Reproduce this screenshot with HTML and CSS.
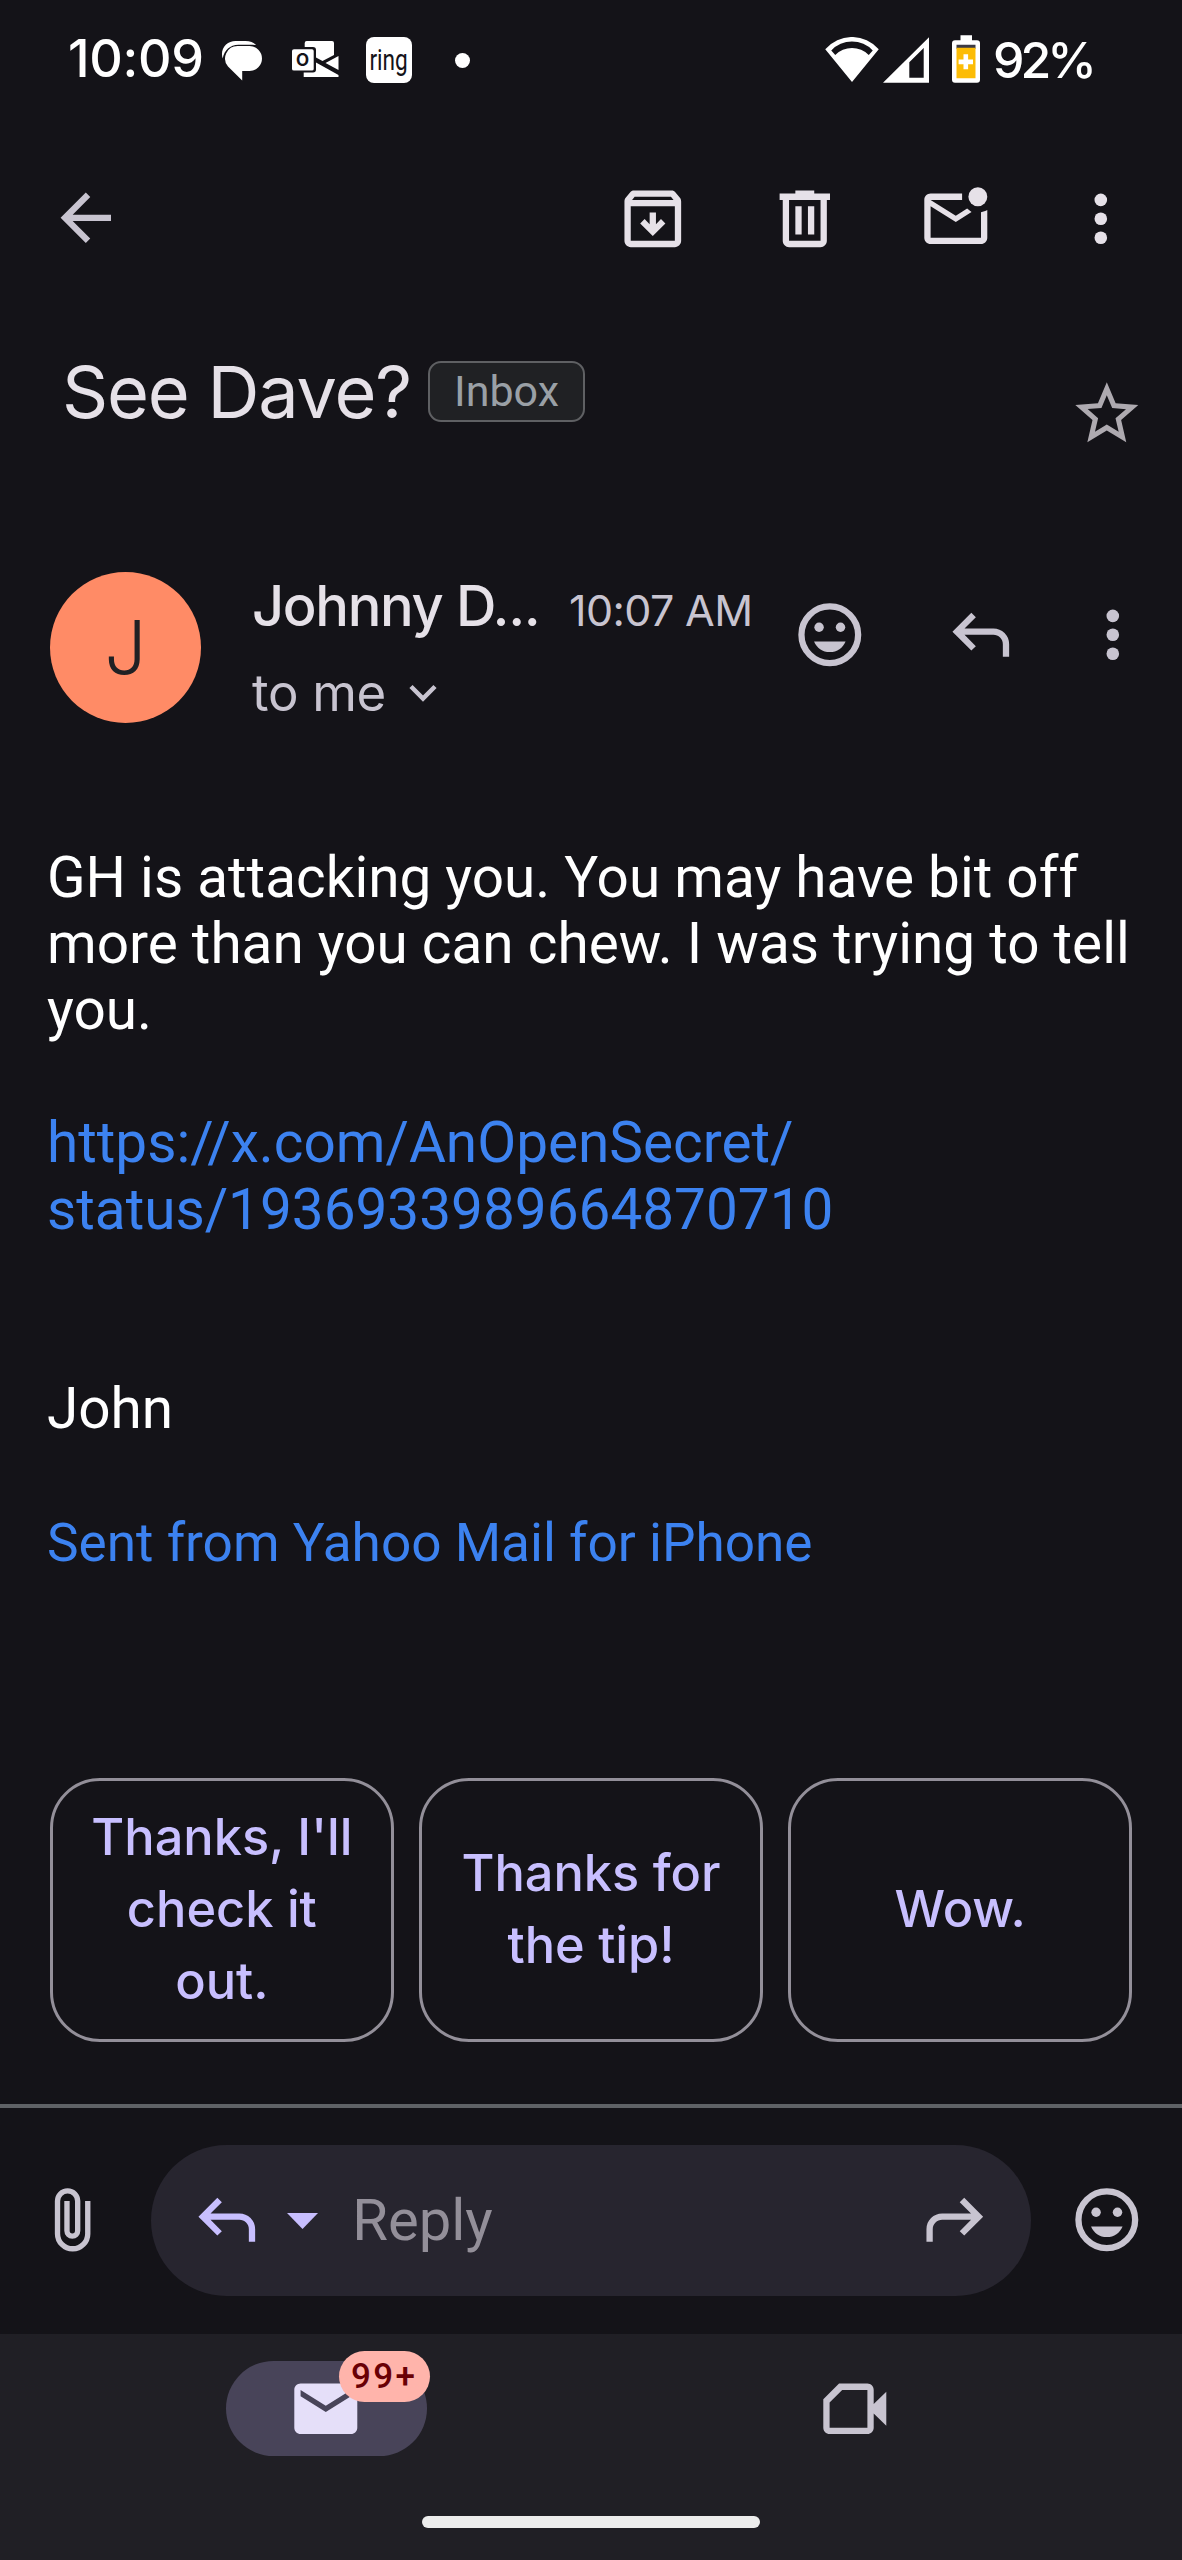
FILE: index.html
```html
<!DOCTYPE html>
<html lang="en">
<head>
<meta charset="utf-8">
<title>See Dave?</title>
<link rel="stylesheet" href="styles.css">
</head>
<body>
<svg class="sprite" aria-hidden="true">
  <symbol id="reply" viewBox="0 0 24 24"><path d="M19 19v-4c0-.83-.29-1.54-.88-2.13C17.54 12.29 16.83 12 16 12H6.83l3.6 3.6L9 17l-6-6 6-6 1.43 1.4L6.83 10H16c1.38 0 2.56.49 3.54 1.46C20.51 12.44 21 13.63 21 15v4h-2z"/></symbol>
  <symbol id="more" viewBox="0 0 24 24"><circle cx="12" cy="6" r="2"/><circle cx="12" cy="12" r="2"/><circle cx="12" cy="18" r="2"/></symbol>
  <symbol id="smile" viewBox="0 0 24 24"><circle cx="12" cy="12" r="9" fill="none" stroke="currentColor" stroke-width="2"/><circle cx="8.6" cy="9.6" r="1.5"/><circle cx="15.4" cy="9.6" r="1.5"/><path d="M12 17.5c2.3 0 4.2-1.4 5-3.4H7c.8 2 2.7 3.4 5 3.4z"/></symbol>
</svg>

<header class="status">
  <span class="clock">10:09</span>
  <svg class="chat" viewBox="0 0 40 40"><path d="M1.2 17.5C-2 7.5 5.5 0 14 0h10c4.500 0 8 1.300 10.500 4.100L31 3.700H17C8.500 3.700 2.800 9 1.200 17.500z"/><path d="M16 5h12a12.500 12.500 0 0 1 0 25h-7.300v9.500L6.500 25.500A12.500 12.500 0 0 1 16 5z"/></svg>
  <svg class="outlook" viewBox="0 0 47 37"><path d="M12.700 6V2q0-2 2-2H40q2 0 2 2v12l-11.500 6-6.500-3.500V9q0-3-3-3zM33.500 22L46.500 15v14zM11.700 36v-4.500H21q3 0 3-3v-7L46.500 34v2zM2 8.300h18q1.700 0 1.700 1.700v18q0 1.500-1.700 1.500H2Q0 29.500 0 28V10q0-1.700 2-1.700z"/><text x="10.600" y="24.800" text-anchor="middle">O</text></svg>
  <span class="ring"><span>ring</span></span>
  <span class="dot"></span>
  <svg class="wifi" viewBox="0 0 53.500 45"><path fill-rule="evenodd" d="M0 12.300A35.200 35.200 0 0 1 53.500 12.300L26.750 45zM6 13.500L10 18A23.500 23.500 0 0 1 43.500 18L47.500 13.500A28.400 28.400 0 0 0 6 13.500z"/></svg>
  <svg class="signal" viewBox="0 0 46 45.500"><path fill-rule="evenodd" d="M0 45.500L46 0v45.500zM26.300 25v15.500h14.400V10.700z"/></svg>
  <svg class="battery" viewBox="0 0 28 47.500"><path d="M8.500 0h11.500v5H25q3 0 3 3v36.500q0 3-3 3H3q-3 0-3-3V8q0-3 3-3h5.500z"/><path fill="#3c3a44" d="M4.500 9.500h19v4h-19z"/><path fill="#fcbc05" d="M4.500 12.500h19V43h-19z"/><path d="M11.500 19h4.600v5.200h4.900v4.700h-4.900V34h-4.600v-5.100H6.600v-4.700h4.900z"/></svg>
  <span class="percent">92%</span>
</header>

<nav class="toolbar">
  <svg class="icon back" viewBox="0 0 24 24"><path d="M20 11H7.830l5.590-5.590L12 4l-8 8 8 8 1.410-1.410L7.830 13H20v-2z"/></svg>
  <svg class="icon" viewBox="0 0 24 24"><path d="M20.540 5.230l-1.390-1.680C18.880 3.210 18.470 3 18 3H6c-.47 0-.88.21-1.160.55L3.460 5.230C3.170 5.570 3 6.020 3 6.500V19c0 1.100.9 2 2 2h14c1.100 0 2-.9 2-2V6.500c0-.48-.17-.93-.46-1.270zM6.240 5h11.520l.83 1H5.420l.82-1zM5 19V8h14v11H5z"/><path d="M8 13.500l4 4 4-4-1.400-1.400-1.600 1.600V10h-2v3.700l-1.600-1.600z"/></svg>
  <svg class="icon" viewBox="0 0 24 24"><path d="M7 21c-.55 0-1.020-.2-1.410-.59C5.200 20.020 5 19.550 5 19V6H4V4h5V3h6v1h5v2h-1v13c0 .55-.2 1.020-.59 1.410-.39.39-.86.59-1.410.59H7zM17 6H7v13h10V6zM9 17h2V8H9v9zm4 0h2V8h-2v9z"/></svg>
  <svg class="icon" viewBox="0 0 24 24"><path d="M22 9.200V18c0 1.100-.9 2-2 2H4c-1.100 0-2-.9-2-2V6c0-1.100.9-2 2-2h10v2H4l8 5 3.600-2.250L17 9.850 12 13 4 8v10h16V9.900c.74-.15 1.420-.35 2-.7z"/><circle cx="19" cy="5" r="3"/></svg>
  <svg class="icon more"><use href="#more"/></svg>
</nav>

<section class="subject">
  <h1>See Dave?</h1>
  <span class="chip">Inbox</span>
  <svg class="icon star" viewBox="0 0 24 24"><path d="M22 9.240l-7.190-.62L12 2 9.190 8.630 2 9.240l5.460 4.730L5.820 21 12 17.270 18.180 21l-1.630-7.030L22 9.240zM12 15.400l-3.760 2.270 1-4.280-3.320-2.880 4.380-.38L12 6.100l1.710 4.040 4.380.38-3.320 2.880 1 4.280L12 15.400z"/></svg>
</section>

<section class="sender">
  <div class="avatar">J</div>
  <div class="who">
    <div class="line"><span class="name">Johnny D...</span><time>10:07 AM</time></div>
    <div class="to"><span>to me</span><svg viewBox="0 0 28 18"><path d="M2 2.500l12 12 12-12" fill="none" stroke="currentColor" stroke-width="4.500"/></svg></div>
  </div>
  <div class="actions">
    <svg class="icon"><use href="#smile"/></svg>
    <svg class="icon"><use href="#reply"/></svg>
    <svg class="icon"><use href="#more"/></svg>
  </div>
</section>

<main class="message">
  <p>GH is attacking you. You may have bit off<br>more than you can chew. I was trying to tell<br>you.</p>
  <p class="gap1"><a class="url">https://x.com/AnOpenSecret/<br>status/1936933989664870710</a></p>
  <p class="gap2">John</p>
  <p class="gap1"><a class="sent">Sent from Yahoo Mail for iPhone</a></p>
</main>

<section class="suggestions">
  <button>Thanks, I'll<br>check it<br>out.</button>
  <button>Thanks for<br>the tip!</button>
  <button>Wow.</button>
</section>

<section class="composer">
  <svg class="icon" viewBox="0 0 24 24"><path d="M16.750 6v10.400a4.800 4.800 0 0 1-9.600 0V6a3.200 3.200 0 0 1 6.400 0v9.500a1.700 1.700 0 0 1-3.400 0V6" fill="none" stroke="currentColor" stroke-width="1.700"/></svg>
  <div class="field">
    <svg class="icon accent"><use href="#reply"/></svg>
    <svg class="caret" viewBox="0 0 31 16"><path d="M0 0h31L15.500 16z"/></svg>
    <span class="placeholder">Reply</span>
    <svg class="icon forward"><use href="#reply"/></svg>
  </div>
  <svg class="icon"><use href="#smile"/></svg>
</section>

<footer class="tabs">
  <div class="tab-row">
    <div class="tab"><div class="pill">
      <svg class="icon" viewBox="0 0 24 24"><path d="M20 4H4c-1.100 0-2 .9-2 2v12c0 1.100.9 2 2 2h16c1.100 0 2-.9 2-2V6c0-1.100-.9-2-2-2zm0 4l-8 5-8-5V6l8 5 8-5v2z"/></svg>
      <span class="badge">99+</span>
    </div></div>
    <div class="tab"><svg class="icon" viewBox="0 0 24 24"><path fill-rule="evenodd" d="M7 4h9c1.100 0 2 .9 2 2v4.500l4-3.900v10.800l-4-3.900V18c0 1.100-.9 2-2 2H4c-1.100 0-2-.9-2-2V9zM8 6l-4 4v8h12V6z"/></svg></div>
  </div>
  <div class="home"></div>
</footer>
</body>
</html>
```
FILE: styles.css
```css
* { box-sizing: border-box; margin: 0; padding: 0; }
body {
  width: 1182px; height: 2560px; overflow: hidden;
  display: flex; flex-direction: column;
  background: #141318; color: #c8c4d0;
  font-family: Inter, "Open Sans", sans-serif;
}
svg { display: block; flex: none; fill: currentColor; }
.sprite { position: absolute; width: 0; height: 0; }
.icon { width: 75.6px; height: 75.6px; }
span, h1, time { white-space: nowrap; }

.status { height: 118px; display: flex; align-items: center; padding-left: 68px; color: #fff; flex: none; }
.clock { width: 153px; font-size: 52px; font-weight: 500; line-height: 60px; letter-spacing: -0.3px; }
.chat { width: 41px; height: 40px; margin-top: 4px; }
.outlook { width: 47px; height: 37px; margin-left: 30px; }
.outlook text { font: 700 17px Inter, sans-serif; fill: #141318; }
.ring { width: 46px; height: 46px; margin-left: 27px; margin-top: 2px; border-radius: 8px; background: #fff; color: #141318; display: flex; align-items: center; justify-content: center; font: 400 29px/40px Roboto, sans-serif; }
.ring span { transform: scaleX(0.78); margin: 0 -4px; }
.dot { width: 15px; height: 15px; border-radius: 50%; background: #fff; margin-left: 43px; margin-top: 2px; }
.wifi { width: 54px; height: 45px; margin-left: 355px; margin-top: 1px; }
.signal { width: 46px; height: 46px; margin-left: 4px; margin-top: 1px; }
.battery { width: 28px; height: 48px; margin-left: 23px; }
.percent { font-size: 50px; font-weight: 500; margin-left: 13px; margin-top: 2px; letter-spacing: -4px; }

.toolbar { height: 201px; display: flex; align-items: center; gap: 75.6px; padding: 0 43.5px 0 48px; color: #e6e1e8; flex: none; }
.back { margin-right: auto; margin-top: -2px; color: #c8c4d0; }
.toolbar .more { margin-left: -6px; }

.subject { height: 143px; display: flex; align-items: center; padding: 2px 37px 0 62px; flex: none; }
h1 { font-size: 72px; font-weight: 400; color: #e6e1e8; width: 366px; letter-spacing: -1.200px; }
.chip { width: 157px; height: 61px; border: 2px solid #5f6063; border-radius: 13px; background: #202124; color: #9aa0a6; font: 400 43px/56px Roboto, sans-serif; text-align: center; }
.star { margin-left: auto; margin-top: 45px; color: #aeaab0; }

.sender { height: 261px; padding: 109px 31px 0 50px; display: flex; align-items: flex-start; flex: none; }
.avatar { width: 151px; height: 151px; margin-top: 0.500px; border-radius: 50%; background: #ff8b66; color: #202124; font-size: 74px; font-weight: 350; line-height: 150px; text-align: center; }
.who { width: 538px; margin-left: 51px; }
.line { display: flex; align-items: baseline; height: 84px; padding-top: 1px; }
.name { width: 317px; font-size: 56px; line-height: 68px; font-weight: 550; color: #e6e1e8; letter-spacing: -1.350px; }
time { font-size: 43px; letter-spacing: -0.600px; }
.to { display: flex; align-items: center; font-size: 51px; line-height: 76px; letter-spacing: -0.3px; }
.to span { width: 157px; }
.to svg { width: 28px; height: 18px; }
.actions { margin-top: 26px; flex: 1; display: flex; justify-content: flex-start; margin-left: 2px; }
.actions .icon:nth-child(2) { margin-left: 75px; }
.actions .icon:nth-child(3) { margin-left: 57px; }

.message { height: 1055px; padding: 121.500px 0 0 47px; font: 400 56.7px/66.45px Roboto, sans-serif; color: #fff; white-space: nowrap; flex: none; }
.message a { color: #3c82f0; }
.message .sent { font-size: 53.15px; }
.gap1 { margin-top: 66.45px; }
.gap2 { margin-top: 132.9px; }

.suggestions { height: 326px; display: flex; align-items: flex-start; gap: 25.500px; padding: 0 50px; flex: none; }
button { flex: 1; height: 264px; padding-bottom: 3px; border: 3px solid #938f99; border-radius: 50px; background: none; color: #c8bfff; font: 500 50.500px/72px Inter, sans-serif; white-space: nowrap; }

.composer { height: 230px; border-top: 4px solid #5f6266; display: flex; align-items: center; padding: 0 38px 2px 35px; flex: none; }
.field { flex: none; width: 880px; height: 151px; margin: 0 37.500px 0 40.500px; border-radius: 76px; background: #27252f; display: flex; align-items: center; padding: 0 39px 0 37.500px; }
.accent, .caret { color: #c8bfff; }
.caret { width: 31px; height: 16px; margin-left: 23px; margin-top: 2px; }
.placeholder { margin-left: 34px; font: 400 58px/70px Roboto, sans-serif; color: #938f99; }
.forward { margin-left: auto; transform: scaleX(-1); }

.tabs { flex: 1; background: #201f25; padding-top: 27px; }
.tab-row { display: flex; padding: 0 63px 0 62px; }
.tab { flex: 1; display: flex; justify-content: center; align-items: center; height: 95px; }
.pill { position: relative; width: 201px; height: 95px; border-radius: 48px; background: #484459; color: #e5dff9; display: flex; align-items: center; justify-content: center; }
.badge { position: absolute; left: 113px; top: -10px; width: 91px; height: 51px; border-radius: 26px; background: #ffb4ab; color: #690005; font: 500 35px/51px Roboto, sans-serif; letter-spacing: 2.400px; text-align: center; }
.home { width: 338px; height: 12px; border-radius: 6px; background: #ededed; margin: 60px auto 0; }
```
